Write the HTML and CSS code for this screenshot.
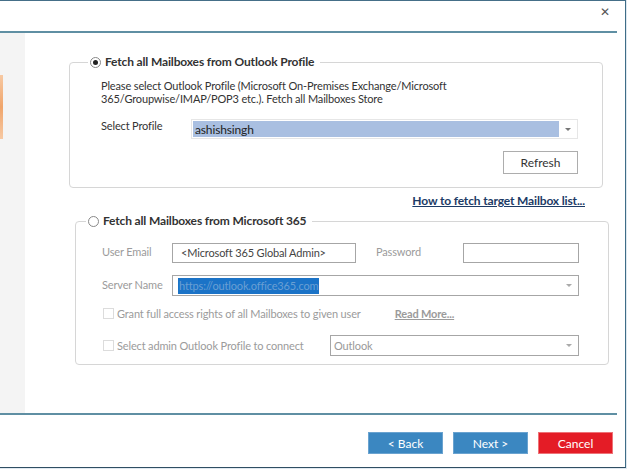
FILE: index.html
```html
<!DOCTYPE html>
<html>
<head>
<meta charset="utf-8">
<title>Fetch Mailboxes</title>
<link rel="stylesheet" href="styles.css">
</head>
<body>
<div class="window">
  <div class="titlebar"><span class="close">&#x2715;</span></div>
  <div class="rule"></div>
  <div class="content">
    <div class="sidebar"><div class="sidebar-mark"></div></div>
    <div class="main">
      <fieldset class="group group-profile">
        <legend><span class="radio checked"></span>Fetch all Mailboxes from Outlook Profile</legend>
        <div class="group-body">
          <p class="desc">Please select Outlook Profile (Microsoft On-Premises Exchange/Microsoft<br>365/Groupwise/IMAP/POP3 etc.). Fetch all Mailboxes Store</p>
          <div class="row row-profile">
            <span class="label">Select Profile</span>
            <div class="combo combo-profile"><span class="sel">ashishsingh</span><span class="arrow"></span></div>
          </div>
          <div class="row row-end"><button class="btn-plain">Refresh</button></div>
        </div>
      </fieldset>
      <div class="help"><a href="#">How to fetch target Mailbox list...</a></div>
      <fieldset class="group group-365">
        <legend><span class="radio"></span>Fetch all Mailboxes from Microsoft 365</legend>
        <div class="group-body">
          <div class="row row-field">
            <span class="label off">User Email</span>
            <div class="input input-email">&lt;Microsoft 365 Global Admin&gt;</div>
            <span class="label off label-pass">Password</span>
            <div class="input input-pass"></div>
          </div>
          <div class="row row-field row-server">
            <span class="label off">Server Name</span>
            <div class="combo combo-server"><span class="hl">https://outlook.office365.com</span><span class="arrow light"></span></div>
          </div>
          <div class="row row-check">
            <span class="check"></span>
            <span class="off">Grant full access rights of all Mailboxes to given user</span>
            <a href="#" class="more">Read More...</a>
          </div>
          <div class="row row-admin">
            <span class="check"></span>
            <span class="off">Select admin Outlook Profile to connect</span>
            <div class="combo combo-admin"><span class="val">Outlook</span><span class="arrow light"></span></div>
          </div>
        </div>
      </fieldset>
    </div>
  </div>
  <div class="rule"></div>
  <div class="footer">
    <button class="btn btn-blue">&lt; Back</button>
    <button class="btn btn-blue">Next &gt;</button>
    <button class="btn btn-red">Cancel</button>
  </div>
</div>
</body>
</html>
```

FILE: styles.css
```css
* {
  box-sizing: border-box;
  margin: 0;
  padding: 0;
}
body {
  background: #dfe8f0;
  font-family: Lato, "Liberation Sans", Arial, sans-serif;
  font-size: 11px;
  letter-spacing: -0.15px;
  color: #333;
}
.window {
  width: 626px;
  height: 468px;
  background: #fff;
  border-top: 1px solid #456f88;
  border-right: 1px solid #3f6d87;
  border-bottom: 1px solid #2f4e63;
  display: flex;
  flex-direction: column;
}
.titlebar {
  height: 30px;
  display: flex;
  justify-content: flex-end;
  padding: 4px 15px 0 0;
}
.close {
  font-size: 12px;
  line-height: 14px;
  color: #555;
}
.rule {
  width: 617px;
  height: 2px;
  background: #5f8fa3;
}
.content {
  display: flex;
  height: 380px;
}
.sidebar {
  width: 25px;
  background: #f4f4f4;
}
.sidebar-mark {
  margin-top: 42px;
  width: 3px;
  height: 64px;
  background: linear-gradient(#f7c9a3, #f0a56b, #f7c9a3);
}
.main {
  flex: 1;
  padding-top: 22px;
}

/* group boxes */
.group {
  border: 1px solid #d6d6d6;
  border-radius: 4px;
}
.group legend {
  display: flex;
  align-items: center;
  height: 14px;
  line-height: 14px;
  padding: 0 6px 0 2px;
  font-size: 12px;
  font-weight: bold;
  color: #333;
}
.group-profile {
  margin-left: 44px;
  width: 533px;
}
.group-profile legend {
  margin-left: 18px;
}
.group-profile .group-body {
  padding: 10px 24px 13px 31px;
}
.group-365 {
  margin-left: 50px;
  width: 532px;
}
.group-365 legend {
  margin-left: 10px;
}
.group-365 .group-body {
  padding: 15px 29px 8px 26px;
}
.radio {
  width: 11px;
  height: 11px;
  border: 1px solid #888;
  border-radius: 50%;
  margin-right: 4px;
  display: flex;
  align-items: center;
  justify-content: center;
  background: #fff;
}
.radio.checked::after {
  content: "";
  width: 5px;
  height: 5px;
  border-radius: 50%;
  background: #222;
}
.desc {
  line-height: 13px;
  color: #333;
}
.row {
  display: flex;
  white-space: nowrap;
}
.row-profile {
  margin-top: 14px;
  align-items: flex-start;
}
.label {
  width: 90px;
  line-height: 14px;
}
.row-end {
  margin-top: 12px;
  justify-content: flex-end;
}
.btn-plain {
  width: 75px;
  height: 23px;
  border: 1px solid #adadad;
  background: #fff;
  font: 12px Lato, "Liberation Sans", Arial, sans-serif;
  color: #333;
}

/* combo boxes */
.combo {
  height: 20px;
  border: 1px solid #a6a6a6;
  display: flex;
  align-items: center;
}
.combo-profile {
  width: 387px;
  border-color: #e6e6e6;
}
.combo-profile .sel {
  flex: 1;
  align-self: stretch;
  margin: 1px 0 1px 1px;
  padding-left: 2px;
  line-height: 18px;
  font-size: 12px;
  background: #a9bfe1;
  color: #222;
}
.arrow {
  width: 18px;
  display: flex;
  justify-content: center;
}
.arrow::after {
  content: "";
  border-left: 3px solid transparent;
  border-right: 3px solid transparent;
  border-top: 3px solid #777;
}
.arrow.light::after {
  border-top-color: #aaa;
}
.combo-server {
  width: 407px;
  height: 21px;
  padding-left: 5px;
}
.hl {
  background: #1b73c7;
  color: #6a9fd3;
  line-height: 16px;
  padding: 0 1px;
}
.combo-server .arrow {
  margin-left: auto;
}
.combo-admin {
  width: 249px;
  height: 21px;
  margin-left: auto;
  color: #999;
  padding-left: 3px;
}
.combo-admin .val {
  flex: 1;
}

/* 365 fields */
.off {
  color: #9b9b9b;
}
.row-field {
  align-items: center;
}
.row-field .label {
  width: 70px;
  padding-bottom: 2px;
}
.row-server {
  margin-top: 12px;
}
.input {
  height: 20px;
  border: 1px solid #a6a6a6;
  line-height: 18px;
  color: #444;
}
.input-email {
  width: 184px;
  padding-left: 8px;
}
.label-pass.label {
  width: 87px;
  margin-left: 20px;
}
.input-pass {
  width: 116px;
}
.row-check {
  margin-top: 10px;
  align-items: center;
  height: 14px;
}
.check {
  width: 11px;
  height: 11px;
  border: 1px solid #dcdcdc;
  margin: 0 3px 0 1px;
}
.more {
  margin-left: 34px;
  font-weight: bold;
  color: #9b9b9b;
}
.row-admin {
  margin-top: 15px;
  align-items: center;
}

.help {
  height: 26px;
  line-height: 26px;
  text-align: right;
  padding-right: 40px;
}
.help a {
  font-size: 12px;
  font-weight: bold;
  color: #1c3b66;
}

/* footer buttons */
.footer {
  flex: 1;
  display: flex;
  justify-content: flex-end;
  align-items: flex-start;
  gap: 10px;
  padding: 17px 12px 0 0;
}
.btn {
  width: 75px;
  height: 22px;
  font: 12px Lato, "Liberation Sans", Arial, sans-serif;
  color: #fff;
}
.btn-blue {
  background: #3b87c1;
  border: 1px solid #6aa3d0;
}
.btn-red {
  background: #e41c26;
  border: 1px solid #ee7277;
}
```
